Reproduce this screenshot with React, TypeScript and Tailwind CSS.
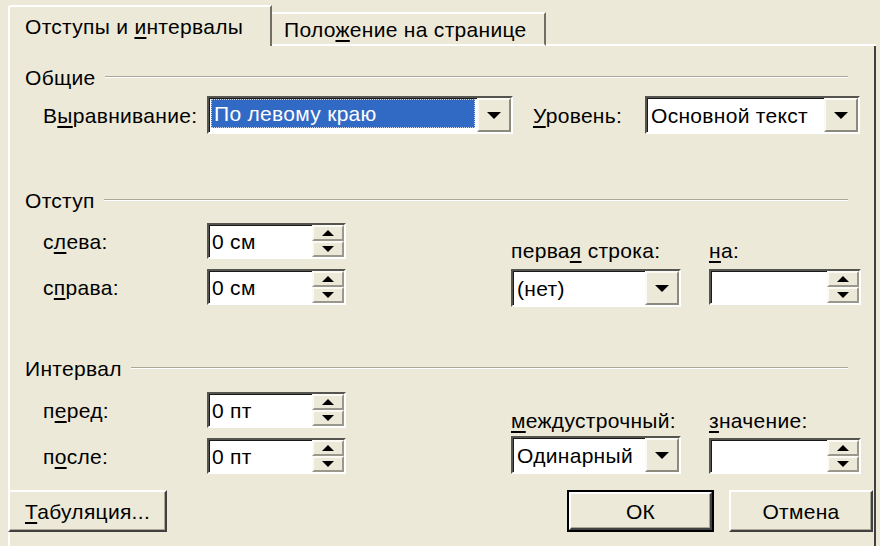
import type { ReactNode } from 'react'

const font = { fontFamily: '"Liberation Sans", "DejaVu Sans", sans-serif' }

function U({ children }: { children: ReactNode }) {
  return <span className="underline underline-offset-[3px] decoration-[2px]">{children}</span>
}

function Arrow({ up = false, small = false }: { up?: boolean; small?: boolean }) {
  if (small) {
    return up ? (
      <div className="w-0 h-0 border-x-[6px] border-x-transparent border-b-[6px] border-b-black" />
    ) : (
      <div className="w-0 h-0 border-x-[6px] border-x-transparent border-t-[6px] border-t-black" />
    )
  }
  return <div className="w-0 h-0 border-x-[7px] border-x-transparent border-t-[7px] border-t-black" />
}

function DropBtn() {
  return (
    <div className="w-[34px] h-full bg-[#ece9d8] border-2 border-t-[#fbfaf5] border-l-[#fbfaf5] border-b-[#8c8a7e] border-r-[#8c8a7e] flex items-center justify-center">
      <Arrow />
    </div>
  )
}

function SpinBtns() {
  return (
    <div className="w-[32px] h-full flex flex-col">
      <div className="flex-1 bg-[#ece9d8] border-2 border-t-[#fbfaf5] border-l-[#fbfaf5] border-b-[#9a988c] border-r-[#9a988c] flex items-center justify-center">
        <Arrow up small />
      </div>
      <div className="flex-1 bg-[#ece9d8] border-2 border-t-[#fbfaf5] border-l-[#fbfaf5] border-b-[#9a988c] border-r-[#9a988c] flex items-center justify-center">
        <Arrow small />
      </div>
    </div>
  )
}

function Select({ value, width, selected = false }: { value: string; width: string; selected?: boolean }) {
  return (
    <div className={`${width} h-[38px] flex bg-white border-2 border-t-[#55544e] border-l-[#55544e] border-b-white border-r-white shadow-[inset_1px_1px_0_#1a1a1a]`}>
      <div className="flex-1 flex items-start pl-[2px] pt-[1px]">
        {selected ? (
          <div className="flex-1 h-[29px] mr-[2px] bg-[#316ac5] text-white flex items-center pl-[3px] outline-1 outline-dotted outline-[#c9d6ee] -outline-offset-1">
            <span>{value}</span>
          </div>
        ) : (
          <span className="h-[32px] flex items-center pl-[2px]">{value}</span>
        )}
      </div>
      <DropBtn />
    </div>
  )
}

function Spin({ value = '', width }: { value?: string; width: string }) {
  return (
    <div className={`${width} h-[36px] flex bg-white border-2 border-t-[#55544e] border-l-[#55544e] border-b-white border-r-white shadow-[inset_1px_1px_0_#1a1a1a]`}>
      <div className="flex-1 flex items-center pl-[3px]">{value}</div>
      <SpinBtns />
    </div>
  )
}

function GroupTitle({ children }: { children: ReactNode }) {
  return (
    <div className="h-[22px] flex items-center pl-[15px] pr-[26px]">
      <span className="pr-[9px]">{children}</span>
      <div className="flex-1 h-[2px] border-t border-[#aca899] border-b border-b-white" />
    </div>
  )
}

function Btn({ children, width, isDefault = false }: { children: ReactNode; width: string; isDefault?: boolean }) {
  return (
    <div className={`${width} h-[42px] ${isDefault ? 'border-2 border-black' : ''}`}>
      <div className="h-full flex items-center justify-center bg-[#ece9d8] border-2 border-t-white border-l-white border-b-[#404040] border-r-[#404040] shadow-[inset_-1px_-1px_0_#aca899]">
        <span>{children}</span>
      </div>
    </div>
  )
}

export default function App() {
  return (
    <div style={font} className="w-[880px] h-[546px] bg-[#ece9d8] text-[21px] tracking-[0.3px] text-black overflow-hidden pl-[8px] pr-[4px] leading-none">
      {/* TABS */}
      <div className="h-[46px] flex items-end">
        <div className="w-[264px] h-[41px] border-l-2 border-t-2 border-white border-r-2 border-r-[#716f64] rounded-tl-[3px] flex items-center pl-[15px]">
          <span>Отступы и <U>и</U>нтервалы</span>
        </div>
        <div className="w-[274px] h-[34px] border-t-2 border-white border-r-2 border-r-[#716f64] border-b-2 border-b-white flex items-center pl-[12px]">
          <span>Поло<U>ж</U>ение на странице</span>
        </div>
        <div className="flex-1 border-b-2 border-white" />
      </div>

      {/* PAGE */}
      <div className="h-[500px] border-l-2 border-white border-r-2 border-r-[#404040]">
        <div className="pt-[20px]">
          <GroupTitle>Общие</GroupTitle>
          <div className="flex items-center mt-[8px] pl-[33px]">
            <span className="w-[164px]">В<U>ы</U>равнивание:</span>
            <Select value="По левому краю" width="w-[306px]" selected />
            <span className="w-[132px] pl-[20px]"><U>У</U>ровень:</span>
            <Select value="Основной текст" width="w-[215px]" />
          </div>
        </div>

        <div className="mt-[55px]">
          <GroupTitle>Отступ</GroupTitle>
          <div className="flex pl-[33px] mt-[12px]">
            <div className="w-[303px] flex flex-col gap-[10px]">
              <div className="flex items-center">
                <span className="w-[164px]">с<U>л</U>ева:</span>
                <Spin value="0 см" width="w-[139px]" />
              </div>
              <div className="flex items-center">
                <span className="w-[164px]">с<U>п</U>рава:</span>
                <Spin value="0 см" width="w-[139px]" />
              </div>
            </div>
            <div className="ml-[165px] flex gap-[28px] pt-[17px]">
              <div className="flex flex-col">
                <span className="block h-[22px] leading-[22px]">перва<U>я</U> строка:</span>
                <div className="mt-[7px]"><Select value="(нет)" width="w-[170px]" /></div>
              </div>
              <div className="flex flex-col">
                <span className="block h-[22px] leading-[22px]"><U>н</U>а:</span>
                <div className="mt-[7px]"><Spin width="w-[152px]" /></div>
              </div>
            </div>
          </div>
        </div>

        <div className="mt-[50px]">
          <GroupTitle>Интервал</GroupTitle>
          <div className="flex pl-[33px] mt-[13px]">
            <div className="w-[303px] flex flex-col gap-[10px]">
              <div className="flex items-center">
                <span className="w-[164px]">п<U>е</U>ред:</span>
                <Spin value="0 пт" width="w-[139px]" />
              </div>
              <div className="flex items-center">
                <span className="w-[164px]">п<U>о</U>сле:</span>
                <Spin value="0 пт" width="w-[139px]" />
              </div>
            </div>
            <div className="ml-[165px] flex gap-[28px] pt-[18px]">
              <div className="flex flex-col">
                <span className="block h-[22px] leading-[22px]"><U>м</U>еждустрочный:</span>
                <div className="mt-[4px]"><Select value="Одинарный" width="w-[170px]" /></div>
              </div>
              <div className="flex flex-col">
                <span className="block h-[22px] leading-[22px]"><U>з</U>начение:</span>
                <div className="mt-[6px]"><Spin width="w-[152px]" /></div>
              </div>
            </div>
          </div>
        </div>

        {/* BUTTONS */}
        <div className="flex mt-[16px] -ml-[2px]">
          <Btn width="w-[159px]"><U>Т</U>абуляция...</Btn>
          <div className="ml-[400px]"><Btn width="w-[147px]" isDefault>ОК</Btn></div>
          <div className="ml-[15px]"><Btn width="w-[144px]">Отмена</Btn></div>
        </div>
      </div>
    </div>
  )
}
